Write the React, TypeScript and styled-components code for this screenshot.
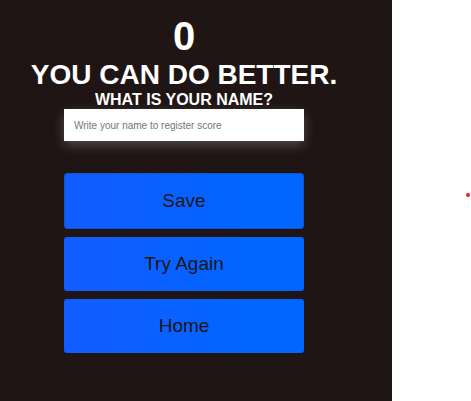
import React from "react";
import styled, { createGlobalStyle } from "styled-components";

const GlobalStyle = createGlobalStyle`
  *, *::before, *::after {
    box-sizing: border-box;
    margin: 0;
  }
  body {
    background: #ffffff;
    font-family: "Liberation Sans", Arial, sans-serif;
  }
`;

const Page = styled.div`
  display: grid;
  grid-template-columns: 1fr 79px;
  min-height: 100vh;
`;

const Panel = styled.main`
  display: flex;
  flex-direction: column;
  align-items: center;
  padding: 12px 40px 48px 16px;
  background: #1e1514;
  color: #ffffff;
  text-align: center;
`;

const Margin = styled.aside`
  display: flex;
  align-items: center;
  justify-content: flex-end;
  padding: 0 1px 12px 0;
`;

const Dot = styled.span`
  width: 4px;
  height: 4px;
  border-radius: 50%;
  background: #ed1c24;
`;

const Score = styled.h1`
  font-size: 40px;
  line-height: 48px;
`;

const Verdict = styled.h2`
  font-size: 28px;
  line-height: 30px;
`;

const Form = styled.form`
  display: flex;
  flex-direction: column;
  width: 100%;
  max-width: 240px;
`;

const Question = styled.label`
  font-size: 16px;
  font-weight: bold;
  line-height: 19px;
  white-space: nowrap;
  align-self: center;
`;

const NameInput = styled.input`
  width: 100%;
  height: 32px;
  margin-bottom: 32px;
  padding: 0 10px;
  border: 0;
  border-radius: 0;
  background: #ffffff;
  box-shadow: 0 4px 12px rgba(255, 255, 255, 0.24);
  color: #1e1514;
  font-family: inherit;
  font-size: 10px;

  &::placeholder {
    color: #757575;
  }
`;

const Actions = styled.div`
  display: flex;
  flex-direction: column;
  gap: 8px;
`;

const Button = styled.button<{ $outlined?: boolean }>`
  height: ${({ $outlined }) => ($outlined ? 56 : 54)}px;
  padding: 0;
  border: ${({ $outlined }) => ($outlined ? "1px solid #0f55cc" : "0")};
  border-radius: 3px;
  background: linear-gradient(90deg, #125cff, #0066ff 80%);
  background-origin: border-box;
  color: #1e1514;
  font-family: inherit;
  font-size: 19px;
  cursor: pointer;
`;

export default function App() {
  return (
    <>
      <GlobalStyle />
      <Page>
        <Panel>
          <Score>0</Score>
          <Verdict>YOU CAN DO BETTER.</Verdict>
          <Form onSubmit={(event) => event.preventDefault()}>
            <Question htmlFor="player-name">WHAT IS YOUR NAME?</Question>
            <NameInput
              id="player-name"
              type="text"
              placeholder="Write your name to register score"
            />
            <Actions>
              <Button type="submit" $outlined>
                Save
              </Button>
              <Button type="button">Try Again</Button>
              <Button type="button">Home</Button>
            </Actions>
          </Form>
        </Panel>
        <Margin>
          <Dot />
        </Margin>
      </Page>
    </>
  );
}
